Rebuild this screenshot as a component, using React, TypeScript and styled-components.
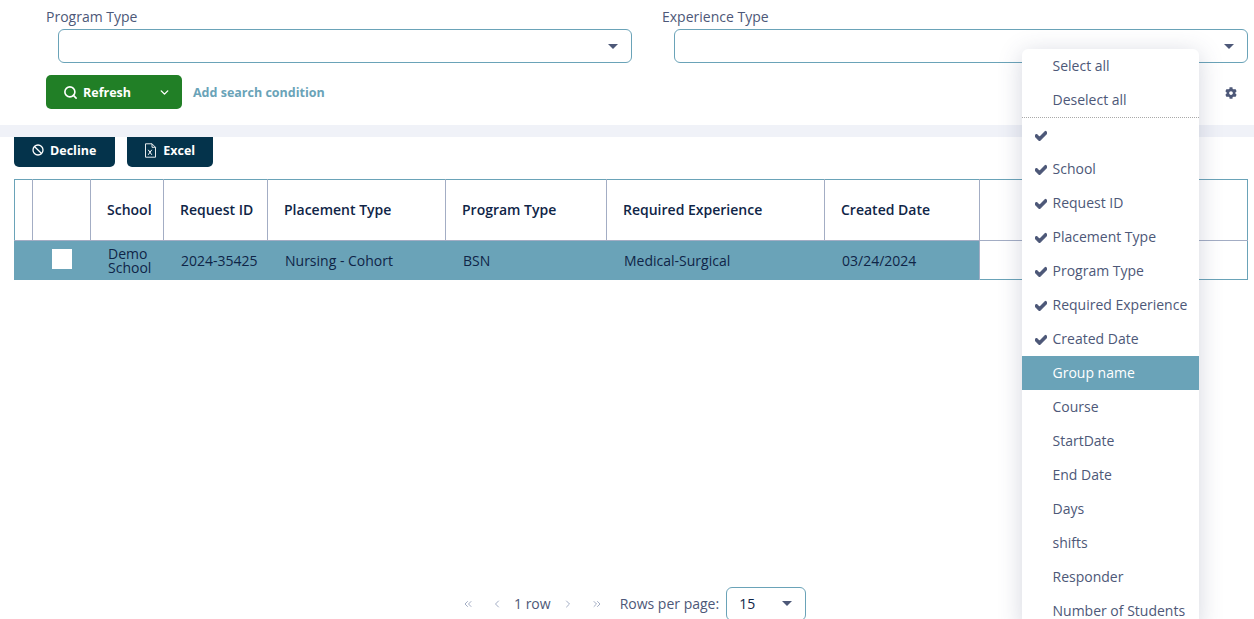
import { createGlobalStyle } from "styled-components";
import styled from "styled-components";
import { Ban, ChevronDown, ChevronLeft, ChevronRight, ChevronsLeft, ChevronsRight, Search } from "lucide-react";
import { FaCheck, FaCog } from "react-icons/fa";

const GlobalStyle = createGlobalStyle`
  html, body {
    margin: 0;
    padding: 0;
    height: 619px;
    overflow: hidden;
    background: #fff;
    font-family: "Open Sans", "Liberation Sans", sans-serif;
    font-size: 14px;
    color: #4d5878;
  }
`;

const columns = [
  { label: "", width: 18 },
  { label: "", width: 58 },
  { label: "School", width: 73 },
  { label: "Request ID", width: 104 },
  { label: "Placement Type", width: 178 },
  { label: "Program Type", width: 161 },
  { label: "Required Experience", width: 218 },
  { label: "Created Date", width: 155 },
  { label: "", width: 268 },
];

const menuItems = [
  { label: "", checked: true },
  { label: "School", checked: true },
  { label: "Request ID", checked: true },
  { label: "Placement Type", checked: true },
  { label: "Program Type", checked: true },
  { label: "Required Experience", checked: true },
  { label: "Created Date", checked: true },
  { label: "Group name", active: true },
  { label: "Course" },
  { label: "StartDate" },
  { label: "End Date" },
  { label: "Days" },
  { label: "shifts" },
  { label: "Responder" },
  { label: "Number of Students" },
];

function ExcelIcon() {
  return (
    <svg width="13" height="15" viewBox="0 0 13 15" fill="none" stroke="#fff" strokeWidth="0.9">
      <path d="M1.5 .8h6.5l3.5 3.5v9.9h-10z" />
      <path d="M8 .8v3.5h3.5" />
      <path d="M4.2 6.8l3.6 5M7.8 6.8l-3.6 5" strokeWidth="1" />
    </svg>
  );
}

export default function App() {
  return (
    <Page>
      <GlobalStyle />
      <FilterPanel>
        <FilterGrid>
          <Field>
            <FieldLabel>Program Type</FieldLabel>
            <SelectBox>
              <Caret />
            </SelectBox>
          </Field>
          <Field>
            <FieldLabel>Experience Type</FieldLabel>
            <SelectBox>
              <Caret />
            </SelectBox>
          </Field>
        </FilterGrid>
        <ActionRow>
          <RefreshButton>
            <RefreshMain>
              <Search size={15} strokeWidth={2.6} />
              Refresh
            </RefreshMain>
            <ChevronDown size={13} strokeWidth={2.6} />
          </RefreshButton>
          <AddCondition>Add search condition</AddCondition>
          <GearSlot>
            <FaCog size={12} />
          </GearSlot>
        </ActionRow>
      </FilterPanel>
      <Band />
      <Toolbar>
        <DarkButton>
          <Ban size={12} strokeWidth={2.6} />
          Decline
        </DarkButton>
        <DarkButton>
          <ExcelIcon />
          Excel
        </DarkButton>
      </Toolbar>
      <Table>
        <colgroup>
          {columns.map((c, i) => (
            <col key={i} style={{ width: c.width }} />
          ))}
        </colgroup>
        <thead>
          <tr>
            {columns.map((c, i) => (
              <HeadCell key={i}>{c.label}</HeadCell>
            ))}
          </tr>
        </thead>
        <tbody>
          <tr>
            <BodyCell $selected />
            <BodyCell $selected>
              <CheckBox />
            </BodyCell>
            <BodyCell $selected>
              <SchoolName>Demo School</SchoolName>
            </BodyCell>
            <BodyCell $selected>2024-35425</BodyCell>
            <BodyCell $selected>Nursing - Cohort</BodyCell>
            <BodyCell $selected>BSN</BodyCell>
            <BodyCell $selected>Medical-Surgical</BodyCell>
            <BodyCell $selected>03/24/2024</BodyCell>
            <BodyCell />
          </tr>
        </tbody>
      </Table>
      <Pager>
        <PagerIcon><ChevronsLeft size={12} /></PagerIcon>
        <PagerIcon><ChevronLeft size={12} /></PagerIcon>
        <RowCount>1 row</RowCount>
        <PagerIcon><ChevronRight size={12} /></PagerIcon>
        <PagerIcon><ChevronsRight size={12} /></PagerIcon>
        <PerPageLabel>Rows per page:</PerPageLabel>
        <PerPageSelect>
          15
          <Caret />
        </PerPageSelect>
      </Pager>
      <ColumnMenu>
        <MenuItem>Select all</MenuItem>
        <MenuItem>Deselect all</MenuItem>
        <MenuDivider />
        {menuItems.map((item, i) => (
          <MenuItem key={i} $active={item.active}>
            {item.checked && (
              <MenuCheck>
                <FaCheck size={12} stroke="currentColor" strokeWidth={50} />
              </MenuCheck>
            )}
            {item.label}
          </MenuItem>
        ))}
      </ColumnMenu>
    </Page>
  );
}

const Page = styled.div`
  position: relative;
  height: 619px;
  overflow: hidden;
`;

const FilterPanel = styled.div`
  height: 125px;
  padding: 8px 6px 0 46px;
  box-sizing: border-box;
`;

const FilterGrid = styled.div`
  display: grid;
  grid-template-columns: 586px 586px;
  column-gap: 30px;
`;

const Field = styled.div`
  display: flex;
  flex-direction: column;
`;

const FieldLabel = styled.label`
  font-size: 14px;
  line-height: 18px;
  height: 21px;
`;

const SelectBox = styled.div`
  margin-left: 12px;
  height: 34px;
  box-sizing: border-box;
  border: 1px solid #6aa3b8;
  border-radius: 6px;
  display: flex;
  align-items: center;
  justify-content: flex-end;
  padding-right: 13px;
`;

const Caret = styled.span`
  width: 0;
  height: 0;
  border-left: 5px solid transparent;
  border-right: 5px solid transparent;
  border-top: 5px solid #4d5878;
`;

const ActionRow = styled.div`
  display: flex;
  align-items: center;
  margin-top: 12px;
  height: 34px;
`;

const RefreshButton = styled.button`
  width: 136px;
  height: 34px;
  border: 0;
  border-radius: 5px;
  background: #217f26;
  color: #fff;
  display: flex;
  align-items: center;
  justify-content: space-between;
  padding: 0 11px 0 17px;
  font: 700 12.5px "Open Sans", sans-serif;
`;

const RefreshMain = styled.span`
  display: flex;
  align-items: center;
  gap: 5px;
`;

const AddCondition = styled.a`
  margin-left: 11px;
  font-size: 12.5px;
  font-weight: 700;
  color: #6aa3b8;
`;

const GearSlot = styled.span`
  margin-left: auto;
  margin-right: 11px;
  margin-top: 2px;
  display: flex;
  color: #4d5878;
`;

const Band = styled.div`
  height: 12px;
  background: #f0f2f8;
`;

const Toolbar = styled.div`
  display: flex;
  gap: 12px;
  padding-left: 14px;
  height: 42px;
  align-items: flex-start;
`;

const DarkButton = styled.button`
  height: 30px;
  padding: 0 18px 4px;
  border: 0;
  border-radius: 0 0 5px 5px;
  background: #04334b;
  color: #fff;
  display: flex;
  align-items: center;
  gap: 6px;
  font: 700 12.5px "Open Sans", sans-serif;
  &:first-child { padding-right: 19px; }
  &:last-child { padding-left: 17px; }
`;

const Table = styled.table`
  margin-left: 14px;
  width: 1233px;
  table-layout: fixed;
  border-collapse: collapse;
  border: 1px solid #6aa3b8;
`;

const HeadCell = styled.th`
  height: 61px;
  padding: 0 16px 2px;
  border-left: 1px solid #a3adc4;
  border-bottom: 1px solid #a3adc4;
  text-align: left;
  font-size: 14px;
  font-weight: 600;
  color: #0f2547;
  white-space: nowrap;
  box-sizing: border-box;
  &:first-child { border-left: 0; }
`;

const BodyCell = styled.td<{ $selected?: boolean }>`
  height: 39px;
  padding: 0 17px 0 17.5px;
  box-sizing: border-box;
  background: ${(p) => (p.$selected ? "#6aa3b8" : "#fff")};
  color: #0f2547;
  font-size: 14px;
  white-space: nowrap;
  ${(p) => !p.$selected && "border-left: 1px solid #a3adc4;"}
`;

const SchoolName = styled.div`
  white-space: normal;
  line-height: 14px;
  padding-top: 2px;
`;

const CheckBox = styled.div`
  width: 20px;
  height: 20px;
  margin: 0 0 2px 1.5px;
  background: #fff;
`;

const Pager = styled.div`
  position: absolute;
  left: 462px;
  top: 587px;
  display: flex;
  align-items: center;
  height: 34px;
`;

const PagerIcon = styled.span`
  display: flex;
  width: 12px;
  margin-right: 17px;
  color: #a3adc4;
  &:nth-child(2) { margin-right: 14px; }
  &:nth-child(4) { margin-left: -3px; margin-right: 17px; }
  &:nth-child(5) { margin-right: 17px; }
`;

const RowCount = styled.span`
  margin: 0 14px 2px -3px;
  font-size: 14px;
`;

const PerPageLabel = styled.span`
  font-size: 14px;
  margin: 0 7px 2px 0;
`;

const PerPageSelect = styled.div`
  width: 80px;
  height: 34px;
  box-sizing: border-box;
  border: 1px solid #6aa3b8;
  border-radius: 6px;
  display: flex;
  align-items: center;
  justify-content: space-between;
  padding: 0 13px 2px 12px;
  color: #0f2547;
  font-size: 14px;
`;

const ColumnMenu = styled.div`
  position: absolute;
  left: 1022px;
  top: 49px;
  width: 177px;
  background: #fff;
  border-radius: 6px 6px 0 0;
  box-shadow: 0 4px 24px rgba(60, 70, 110, 0.22);
`;

const MenuItem = styled.div<{ $active?: boolean }>`
  position: relative;
  height: 34px;
  line-height: 34px;
  padding-left: 30.5px;
  white-space: nowrap;
  font-size: 14px;
  background: ${(p) => (p.$active ? "#6aa3b8" : "transparent")};
  color: ${(p) => (p.$active ? "#fff" : "#4d5878")};
`;

const MenuCheck = styled.span`
  position: absolute;
  left: 12.5px;
  top: 12px;
  display: flex;
`;

const MenuDivider = styled.div`
  border-top: 1px dotted #a9a9a9;
`;
